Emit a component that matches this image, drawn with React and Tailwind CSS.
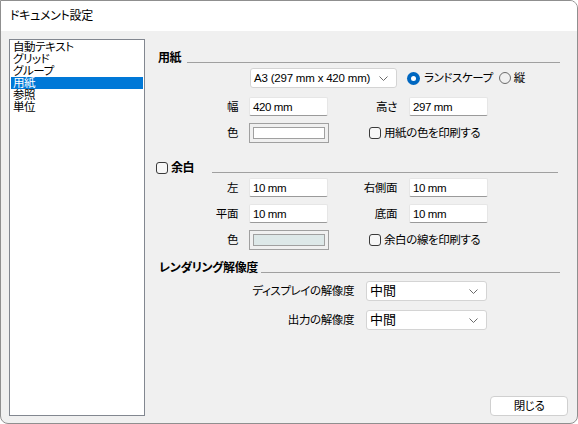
import React from 'react';

const font = "font-['Liberation_Sans','Noto_Sans_CJK_JP',sans-serif] [font-feature-settings:'palt']";
const txt = 'text-[11.5px] leading-[14px] tracking-[-0.4px]';

function Chevron() {
  return (
    <svg width="9" height="5" viewBox="0 0 9 5" className="shrink-0">
      <polyline points="0.5,0.5 4.5,4.5 8.5,0.5" fill="none" stroke="#6a6a6a" strokeWidth="1" />
    </svg>
  );
}

function Select({ value, width, big }) {
  return (
    <div
      className={`flex items-center justify-between h-[20px] bg-white border border-[#d4d4d4] rounded-[3px] pl-[3px] pr-[8px] ${width}`}
    >
      <span className={`whitespace-nowrap ${big ? 'text-[13px] leading-[14px]' : 'text-[11.5px] leading-[14px] tracking-[-0.2px]'}`}>
        {value}
      </span>
      <Chevron />
    </div>
  );
}

function Input({ value }) {
  return (
    <div className={`flex items-center w-[79px] h-[19px] bg-white border border-[#e6e6e6] border-b-[#9a9a9a] rounded-[2px] pl-[3px] ${txt}`}>
      {value}
    </div>
  );
}

function ColorBox({ fill }) {
  return (
    <div className="w-[80px] h-[20px] border border-[#a0a0a0] p-[3px] bg-[#f0f0f0]">
      <div className={`w-full h-full border border-[#a0a0a0] ${fill}`} />
    </div>
  );
}

function Check({ label, bold }) {
  return (
    <div className="flex items-center">
      <span className="w-[12px] h-[12px] rounded-[3px] border border-[#3a3a3a] bg-[#f7f7f7]" />
      <span className={`ml-[3px] whitespace-nowrap ${txt} ${bold ? 'font-bold text-[12px]' : ''}`}>{label}</span>
    </div>
  );
}

function Header({ children, gap }) {
  return (
    <div className="flex h-[14px] mr-[17px]">
      <div className={`flex items-center whitespace-nowrap font-bold text-[12px] leading-[14px] tracking-[-0.4px]`}>{children}</div>
      <div className={`flex-1 self-end mb-[2px] h-px bg-[#a0a0a0] ${gap}`} />
    </div>
  );
}

function FieldRow({ l1, v1, l2, v2, className }) {
  return (
    <div className={`flex items-center ${className}`}>
      <span className={`w-[83px] text-right ${txt}`}>{l1}</span>
      <div className="ml-[11px]">
        <Input value={v1} />
      </div>
      <span className={`w-[69px] text-right ${txt}`}>{l2}</span>
      <div className="ml-[12px]">
        <Input value={v2} />
      </div>
    </div>
  );
}

const items = ['自動テキスト', 'グリッド', 'グループ', '用紙', '参照', '単位'];

export default function App() {
  return (
    <div className={`w-[578px] h-[424px] flex flex-col bg-[#f0f0f0] border border-[#8f8f8f] rounded-tr-[8px] rounded-b-[8px] overflow-hidden text-black ${font}`}>
      <div className="h-[30px] bg-white flex items-center pl-[9px] text-[12px] leading-[14px] tracking-[-0.3px]">
        ドキュメント設定
      </div>

      <div className="flex-1 flex items-start pt-[8px] pl-[8px]">
        <div className="w-[136px] h-[377px] bg-white border border-[#828790] pt-[1px] px-[1px]">
          {items.map((it) => (
            <div
              key={it}
              className={`h-[12px] pl-[2px] text-[11.5px] leading-[12px] tracking-[-0.4px] ${it === '用紙' ? 'bg-[#0078d7] text-white' : ''}`}
            >
              {it}
            </div>
          ))}
        </div>

        <div className="flex-1 h-full flex flex-col ml-[10px]">
          <div className="mt-[12px] pl-[3px]">
            <Header gap="ml-[6px]">用紙</Header>
          </div>

          <div className="flex items-center mt-[3px] ml-[95px]">
            <Select value="A3 (297 mm x 420 mm)" width="w-[147px]" />
            <span className="ml-[10px] w-[13px] h-[13px] rounded-full bg-[#0067c0] flex items-center justify-center">
              <span className="w-[5px] h-[5px] rounded-full bg-white" />
            </span>
            <span className={`ml-[4px] whitespace-nowrap ${txt}`}>ランドスケープ</span>
            <span className="ml-[6px] w-[12px] h-[12px] rounded-full border border-[#6a6a6a]" />
            <span className={`ml-[3px] ${txt}`}>縦</span>
          </div>

          <FieldRow className="mt-[9px]" l1="幅" v1="420 mm" l2="高さ" v2="297 mm" />

          <div className="flex items-center mt-[7px]">
            <span className={`w-[83px] text-right ${txt}`}>色</span>
            <div className="ml-[11px]">
              <ColorBox fill="bg-white" />
            </div>
            <div className="ml-[40px]">
              <Check label="用紙の色を印刷する" />
            </div>
          </div>

          <div className="mt-[18px] pl-[1px]">
            <div className="flex h-[14px] mr-[19px]">
              <Check label="余白" bold />
              <div className="flex-1 self-end mb-[2px] h-px bg-[#a0a0a0] ml-[18px]" />
            </div>
          </div>

          <FieldRow className="mt-[3px]" l1="左" v1="10 mm" l2="右側面" v2="10 mm" />
          <FieldRow className="mt-[7px]" l1="平面" v1="10 mm" l2="底面" v2="10 mm" />

          <div className="flex items-center mt-[7px]">
            <span className={`w-[83px] text-right ${txt}`}>色</span>
            <div className="ml-[11px]">
              <ColorBox fill="bg-[#dde8e8]" />
            </div>
            <div className="ml-[40px]">
              <Check label="余白の線を印刷する" />
            </div>
          </div>

          <div className="mt-[11px] pl-[4px]">
            <Header gap="ml-[3px]">レンダリング解像度</Header>
          </div>

          <div className="flex items-center mt-[6px]">
            <span className={`w-[199px] text-right whitespace-nowrap ${txt}`}>ディスプレイの解像度</span>
            <div className="ml-[12px]">
              <Select value="中間" width="w-[121px]" big />
            </div>
          </div>
          <div className="flex items-center mt-[9px]">
            <span className={`w-[199px] text-right whitespace-nowrap ${txt}`}>出力の解像度</span>
            <div className="ml-[12px]">
              <Select value="中間" width="w-[121px]" big />
            </div>
          </div>

          <div className="flex justify-end mt-[66px] mr-[9px]">
            <button className={`w-[78px] h-[20px] bg-white border border-[#d0d0d0] rounded-[4px] ${txt}`}>
              閉じる
            </button>
          </div>
        </div>
      </div>
    </div>
  );
}
